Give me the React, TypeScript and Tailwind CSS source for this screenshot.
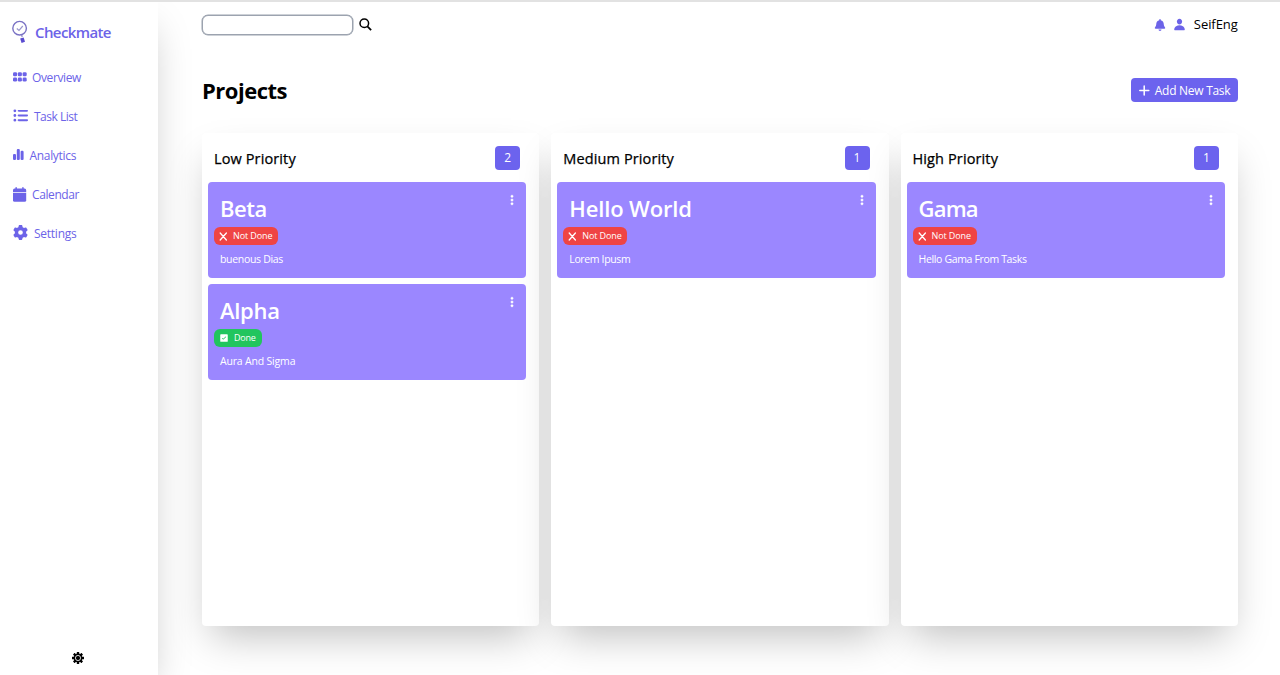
import React from "react";
import { FaBell, FaGear, FaListUl } from "react-icons/fa6";
import { BsThreeDotsVertical } from "react-icons/bs";
import { IoIosCheckbox } from "react-icons/io";
import { IoPerson } from "react-icons/io5";

type Task = { title: string; done: boolean; text: string; titleTrack: string; textTrack: string };
type Column = { name: string; tasks: Task[] };

const columns: Column[] = [
  {
    name: "Low Priority",
    tasks: [
      { title: "Beta", done: false, text: "buenous Dias", titleTrack: "tracking-[-0.5px]", textTrack: "tracking-[-0.32px]" },
      { title: "Alpha", done: true, text: "Aura And Sigma", titleTrack: "tracking-[-0.3px]", textTrack: "tracking-[-0.18px]" },
    ],
  },
  {
    name: "Medium Priority",
    tasks: [
      { title: "Hello World", done: false, text: "Lorem Ipusm", titleTrack: "tracking-[-0.15px]", textTrack: "tracking-[-0.35px]" },
    ],
  },
  {
    name: "High Priority",
    tasks: [
      { title: "Gama", done: false, text: "Hello Gama From Tasks", titleTrack: "tracking-[-0.8px]", textTrack: "tracking-[-0.35px]" },
    ],
  },
];

function Logo() {
  return (
    <svg width="16" height="24" viewBox="0 0 16 24" fill="none" className="shrink-0">
      <circle cx="7.6" cy="8.2" r="6.8" stroke="#7a72c4" strokeWidth="1.4" />
      <path d="M4.8 8.5 7 10.4 10.8 6" stroke="#9a96cc" strokeWidth="1.2" />
      <path d="M9.6 15 10.2 17" stroke="#8a84c8" strokeWidth="1.2" />
      <path d="M9.9 18 11.3 22.4" stroke="#5a4bd0" strokeWidth="3.6" />
    </svg>
  );
}

function GridDots() {
  return (
    <svg width="15" height="10" viewBox="0 0 15 10" fill="currentColor" className="-mt-0.5 shrink-0">
      {[1, 5.8, 10.6].map((x) =>
        [0.2, 5.5].map((y) => <rect key={`${x}-${y}`} x={x} y={y} width="4.1" height="4.1" rx="1.4" />)
      )}
    </svg>
  );
}

function Bars() {
  return (
    <svg width="12" height="11" viewBox="0 0 12 11" fill="currentColor" className="-mt-0.5 shrink-0">
      <rect x="1" y="5" width="3" height="6" rx="1.1" />
      <rect x="4.8" y="0" width="3" height="11" rx="1.1" />
      <rect x="8.6" y="1.8" width="3" height="9.2" rx="1.1" />
    </svg>
  );
}

function CalendarIcon() {
  return (
    <svg width="15" height="15" viewBox="0 0 15 15" fill="currentColor" className="-mt-px shrink-0">
      <path d="M1 5V3.2Q1 1.6 2.6 1.6H3.4V.7Q3.4 0 4.1 0T4.9.7V1.6H10.2V.7Q10.2 0 10.9 0T11.7.7V1.6H12.6Q14.2 1.6 14.2 3.2V5Z" />
      <path d="M1 5.8H14.2V13.2Q14.2 14.8 12.6 14.8H2.6Q1 14.8 1 13.2Z" />
    </svg>
  );
}

function SearchIcon() {
  return (
    <svg width="13" height="13" viewBox="0 0 13 13" fill="none" stroke="black" className="ml-1.5 shrink-0">
      <circle cx="5.3" cy="5.3" r="4.3" strokeWidth="1.5" />
      <path d="M8.4 8.4 12.1 12.1" strokeWidth="1.8" />
    </svg>
  );
}

function Sun() {
  return (
    <svg width="12" height="12" viewBox="0 0 12 12" className="text-black">
      {[0, 45, 90, 135, 180, 225, 270, 315].map((a) => (
        <rect key={a} x="4.8" y="0" width="2.4" height="3" rx="0.3" fill="currentColor" transform={`rotate(${a} 6 6)`} />
      ))}
      <circle cx="6" cy="6" r="4.4" fill="currentColor" />
      <circle cx="6" cy="6" r="2.6" fill="none" stroke="white" strokeWidth="0.8" />
    </svg>
  );
}

function NavItem({ icon, label, gap, track }: { icon: React.ReactNode; label: string; gap: string; track: string }) {
  return (
    <a className={`flex h-[39px] items-center text-[12px] ${gap}`}>
      {icon}
      <span className={track}>{label}</span>
    </a>
  );
}

function TaskCard({ task }: { task: Task }) {
  return (
    <article className="relative flex h-24 flex-col items-start rounded-[4px] bg-[#9b87ff] px-1.5 text-white">
      <h3 className={`mt-2.5 ml-1.5 text-[22px] leading-[32px] font-semibold ${task.titleTrack}`}>{task.title}</h3>
      {task.done ? (
        <span className="mt-[3px] flex h-[18px] w-12 items-center rounded-[6px] bg-[#22c55e] pl-[5px] text-[9px]">
          <IoIosCheckbox size={10} />
          <span className="ml-[5px] tracking-[-0.2px]">Done</span>
        </span>
      ) : (
        <span className="mt-[3px] flex h-[18px] w-16 items-center rounded-[6px] bg-[#ef4444] pl-[5px] text-[9px]">
          <svg width="9" height="9" viewBox="0 0 9 9" fill="none" stroke="white" strokeWidth="1.3" strokeLinecap="round">
            <path d="M1.2 1 7.4 8M7.4 1 1.2 8" />
          </svg>
          <span className="ml-[5px] tracking-[-0.1px]">Not Done</span>
        </span>
      )}
      <p className={`mt-[6px] ml-1.5 text-[10.5px] leading-[16px] ${task.textTrack}`}>{task.text}</p>
      <BsThreeDotsVertical size={12} strokeWidth={0.7} className="absolute top-3 right-2" />
    </article>
  );
}

export default function App() {
  return (
    <div className="flex h-[675px] w-full overflow-hidden border-t-2 border-[#e2e2e2] bg-white font-['Open_Sans','Noto_Sans',sans-serif] text-black">
      <aside className="flex w-[157.5px] shrink-0 flex-col bg-white px-3 text-[#6c63e8] shadow-[0_19px_38px_-9px_rgba(0,0,0,0.25)]">
        <div className="mt-[18px] flex h-6 items-center gap-[7px]">
          <Logo />
          <span className="text-[15px] font-semibold tracking-[-0.6px]">Checkmate</span>
        </div>
        <nav className="mt-[14px] flex flex-col">
          <NavItem icon={<GridDots />} label="Overview" gap="gap-[5px]" track="tracking-[-0.38px]" />
          <NavItem icon={<FaListUl size={15} className="-mt-0.5 ml-px" />} label="Task List" gap="gap-1.5" track="tracking-[-0.5px]" />
          <NavItem icon={<Bars />} label="Analytics" gap="gap-[5.5px]" track="tracking-[-0.32px]" />
          <NavItem icon={<CalendarIcon />} label="Calendar" gap="gap-[5px]" track="tracking-[-0.4px]" />
          <NavItem icon={<FaGear size={15} className="-mt-0.5 ml-px" />} label="Settings" gap="gap-1.5" track="tracking-[-0.25px]" />
        </nav>
        <div className="mt-auto mb-[11px] flex justify-center pr-px">
          <Sun />
        </div>
      </aside>

      <main className="flex flex-1 flex-col pr-[42.2px] pl-[44.5px]">
        <header className="mt-3 flex h-[21px] items-center">
          <input aria-label="Search" className="h-5 w-[151px] rounded-[6px] border border-[#9ca3af] bg-white px-2 text-xs ring-[0.5px] ring-[#9ca3af] outline-none" />
          <SearchIcon />
          <div className="ml-auto flex items-center text-[#6c63e8]">
            <FaBell size={12} />
            <IoPerson size={13} className="ml-[7px]" />
            <span className="ml-2 text-[13px] tracking-[-0.05px] text-black">SeifEng</span>
          </div>
        </header>
        <div className="mt-[39px] flex h-8 items-center justify-between">
          <h1 className="text-[22px] font-bold tracking-[-0.5px]">Projects</h1>
          <button className="flex h-6 w-[107px] items-center rounded-[4px] bg-[#6c63ee] pl-2 text-[12px] text-white">
            <svg width="11" height="11" viewBox="0 0 11 11" fill="none" stroke="white" strokeWidth="1.5" strokeLinecap="round">
              <path d="M5.2 1V10M.8 5.5H9.8" />
            </svg>
            <span className="mt-px ml-[5px] tracking-[-0.28px] whitespace-nowrap">Add New Task</span>
          </button>
        </div>
        <div className="mt-[27px] grid h-[493px] grid-cols-3 gap-3">
          {columns.map((column) => (
            <section key={column.name} className="flex flex-col rounded-[4px] bg-white pr-[13px] pl-1.5 shadow-[0_19px_38px_-9px_rgba(0,0,0,0.25)]">
              <div className="flex h-[49px] items-center justify-between px-1.5">
                <h2 className="mt-0.5 text-[14.5px] font-medium tracking-[0.12px] [-webkit-text-stroke:0.25px_black]">{column.name}</h2>
                <span className="flex h-6 w-[25px] items-center justify-center rounded-[4px] bg-[#6c63ee] pt-px text-[12px] text-white">
                  {column.tasks.length}
                </span>
              </div>
              <div className="flex flex-col gap-1.5">
                {column.tasks.map((task) => (
                  <TaskCard key={task.title} task={task} />
                ))}
              </div>
            </section>
          ))}
        </div>
      </main>
    </div>
  );
}
